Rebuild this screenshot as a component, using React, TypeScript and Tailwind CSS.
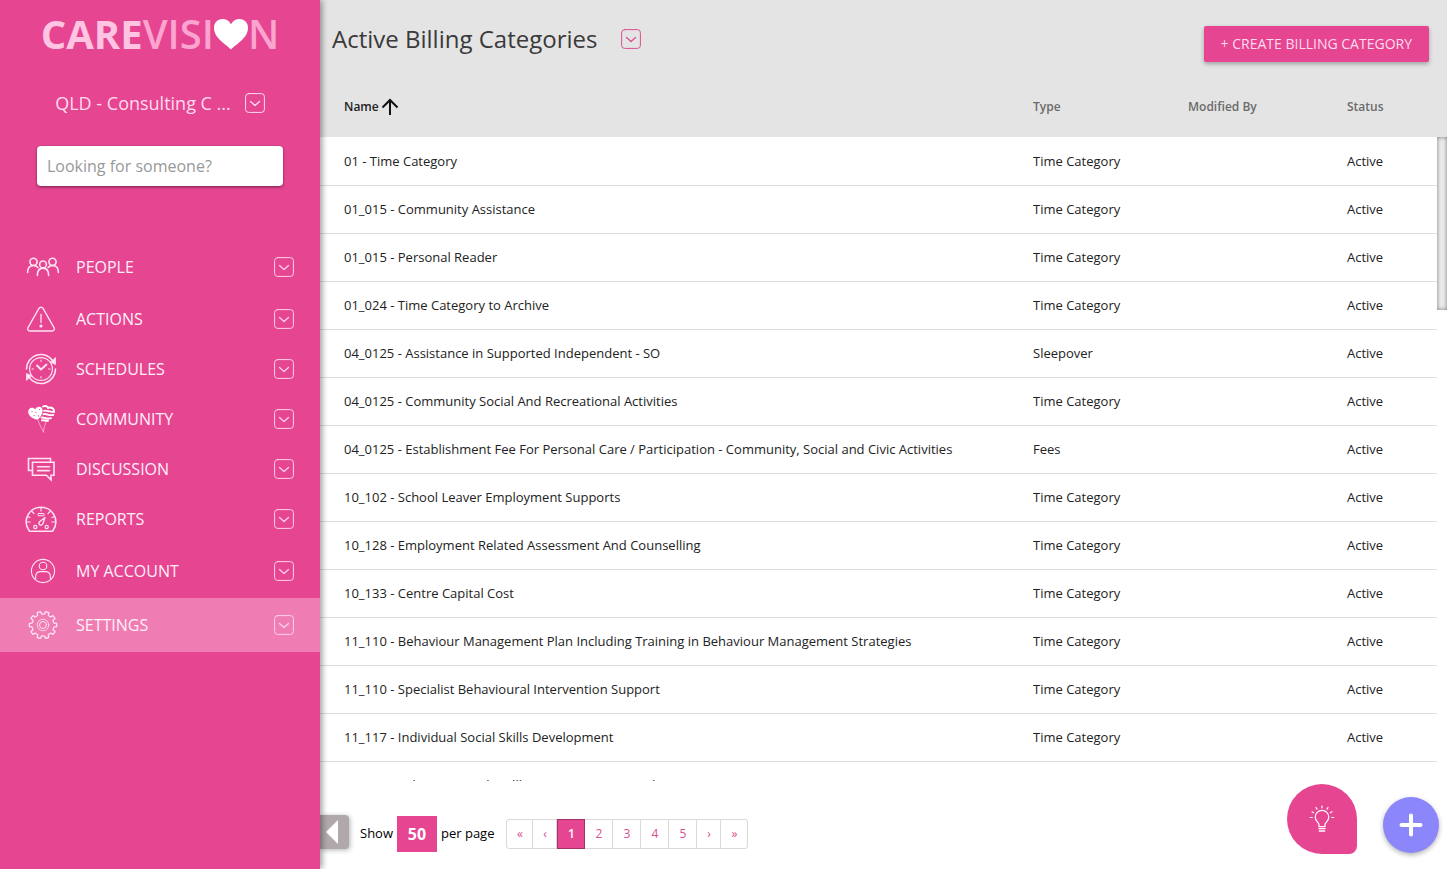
import type {ReactNode} from "react";
import {clsx} from "clsx";

const gearPath = (() => {
    const teeth = 10, cx = 19, cy = 18;
    const pt = (r: number, a: number) => `${(cx + r * Math.cos(a)).toFixed(2)} ${(cy + r * Math.sin(a)).toFixed(2)}`;
    const step = (Math.PI * 2) / teeth;
    let d = "";
    for (let i = 0; i < teeth; i++) {
        const a = i * step - Math.PI / 2 + step / 2;
        d += `${i === 0 ? "M" : "L"}${pt(11.3, a - step * 0.27)}`;
        d += `L${pt(13.7, a - step * 0.2)}`;
        d += `A13.7 13.7 0 0 1 ${pt(13.7, a + step * 0.2)}`;
        d += `L${pt(11.3, a + step * 0.27)}`;
        d += `Q${pt(10.5, a + step * 0.5)} ${pt(11.3, a + step * 0.73)}`;
    }
    return d + "Z";
})();

const NavIcon = ({children}: { children: ReactNode }) => {
    return <svg viewBox="0 0 36 36" className="h-9 w-9 shrink-0" fill="none" stroke="#ffe3f3" strokeWidth={1.6}
                strokeLinecap="round" strokeLinejoin="round" aria-hidden="true">
        {children}
    </svg>
}

const navItems: { label: string, tall?: boolean, active?: boolean, icon: ReactNode }[] = [
    {
        label: "PEOPLE", tall: true, icon: <>
            <circle cx="9.5" cy="12.8" r="3.6"/>
            <circle cx="19" cy="15.4" r="3.4"/>
            <circle cx="28.5" cy="12.8" r="3.6"/>
            <path d="M3.6 23.5c0-4.4 2.4-7 5.9-7 2 0 3.4.7 4.4 2M34.4 23.5c0-4.4-2.4-7-5.9-7-2 0-3.4.7-4.4 2"/>
            <path d="M13.4 26.5c0-4.8 2-7.4 5.6-7.4s5.6 2.6 5.6 7.4"/>
        </>
    },
    {
        label: "ACTIONS", icon: <>
            <path d="M14.8 7.6c1-1.8 3.4-1.8 4.4 0l10.8 19c1 1.7 0 3.4-2 3.4H6c-2 0-3-1.7-2-3.4z" strokeWidth={1.3}/>
            <path d="M17 13.5v8" strokeWidth={1.3}/>
            <circle cx="17" cy="25" r="0.8" fill="#ffe3f3"/>
        </>
    },
    {
        label: "SCHEDULES", icon: <>
            <path d="M2.5 18a14.5 14.5 0 0 1 26.8-7.7M31.5 18a14.5 14.5 0 0 1-26.8 7.7"/>
            <path d="M31.5 7v6.500l-5-2.300zM2.500 29v-6.500l5 2.300z" fill="#ffe3f3" strokeWidth={0.8}/>
            <circle cx="17" cy="18" r="11.4" strokeWidth={1.2}/>
            <path d="M17 9v1.5M17 25.5V27M8 18h1.5M24.5 18H26" strokeWidth={1}/>
            <path d="M13 14.5l4 4 5.5-5" strokeWidth={1.8}/>
        </>
    },
    {
        label: "COMMUNITY", icon: <>
            <path d="M13.5 18.8C8 17.5 4 14.5 4.2 10.5c.2-4 4.800-5 7-2 1.300-3.800 6.800-3.800 7.300.2.500 4-2 7.600-5 10.100z"
                  fill="#fff" stroke="none"/>
            <path d="M19 5.5c3-1.500 5 .5 5 1.500 3-1.500 6.500.5 6 4M20 9.800c3-1 6 2 10 .8M19.500 13.200c3-1 6 2 9.800.6M17.500 16.600c3-.6 6 2 9.500.6M18 19.300c2.500-.2 4 .8 6 .4"
                  stroke="#fff" strokeWidth={1.9}/>
            <path d="M14 19c1 4 3.500 7.500 5.500 12M22.500 20c-1.500 3.500-2.800 7-3 11" strokeWidth={0.6}/>
            <g fill="#e64591" stroke="none">
                <circle cx="8" cy="10.5" r="0.6"/>
                <circle cx="12" cy="11.5" r="0.6"/>
                <circle cx="15.5" cy="8.5" r="0.6"/>
                <circle cx="10" cy="14.5" r="0.6"/>
                <circle cx="14.5" cy="14.8" r="0.6"/>
            </g>
        </>
    },
    {
        label: "DISCUSSION", icon: <g strokeLinejoin="miter">
            <path d="M8.5 19.5h-4v-12h22v3.500"/>
            <path d="M8.5 11.200h21.500v13H27v4.600l-4.600-4.600H8.500z"/>
            <path d="M13.5 15.800h12M13.500 19.600h12"/>
        </g>
    },
    {
        label: "REPORTS", icon: <>
            <path d="M5.5 30.200C1.500 25 1.200 18.500 4.500 13c5.600-9 19.400-9 25 0 3.300 5.500 3 12-1 17.200z" strokeWidth={1.5}/>
            <path d="M17 6.800V10M8 10.500l2 2.200M26 10.500l-2 2.200M3.500 15.500l2.500 1M30.500 15.500l-2.500 1M2.800 21h3.400M31.200 21h-3.400"
                  strokeWidth={1.2}/>
            <rect x="13.8" y="12.5" width="6.4" height="2.2" rx="0.6" strokeWidth={1}/>
            <path d="M21 16.500l-5.500 4.200a2 2 0 1 0 3.300 2z" strokeWidth={1.3}/>
            <circle cx="11.3" cy="26" r="1.6" strokeWidth={1.2}/>
            <circle cx="22.7" cy="26" r="1.6" strokeWidth={1.2}/>
        </>
    },
    {
        label: "MY ACCOUNT", tall: true, icon: <g strokeWidth={1.1}>
            <circle cx="19" cy="18" r="11.6"/>
            <circle cx="19" cy="13" r="3.8"/>
            <path d="M11.6 26.500v-2.500c0-3.500 2-5.400 5-5.400h4.800c3 0 5 1.900 5 5.400v2.500"/>
        </g>
    },
    {
        label: "SETTINGS", tall: true, active: true, icon: <>
            <path d={gearPath} strokeWidth={1.3}/>
            <circle cx="19" cy="18" r="5.8" strokeWidth={0.8}/>
            <circle cx="19" cy="18" r="3.5" strokeWidth={1}/>
        </>
    },
]

const rows = [
    ["01 - Time Category", "Time Category"],
    ["01_015 - Community Assistance", "Time Category"],
    ["01_015 - Personal Reader", "Time Category"],
    ["01_024 - Time Category to Archive", "Time Category"],
    ["04_0125 - Assistance in Supported Independent - SO", "Sleepover"],
    ["04_0125 - Community Social And Recreational Activities", "Time Category"],
    ["04_0125 - Establishment Fee For Personal Care / Participation - Community, Social and Civic Activities", "Fees"],
    ["10_102 - School Leaver Employment Supports", "Time Category"],
    ["10_128 - Employment Related Assessment And Counselling", "Time Category"],
    ["10_133 - Centre Capital Cost", "Time Category"],
    ["11_110 - Behaviour Management Plan Including Training in Behaviour Management Strategies", "Time Category"],
    ["11_110 - Specialist Behavioural Intervention Support", "Time Category"],
    ["11_117 - Individual Social Skills Development", "Time Category"],
    ["12_027 - Other Personal Wellbeing Assessment And Training In Communities", "Time Category"],
]

const pages = [
    {label: "«", width: "w-[26px]"},
    {label: "‹", width: "w-6"},
    {label: "1", width: "w-7"},
    {label: "2", width: "w-7"},
    {label: "3", width: "w-7"},
    {label: "4", width: "w-7"},
    {label: "5", width: "w-7"},
    {label: "›", width: "w-6"},
    {label: "»", width: "w-[26px]"},
]

const ChevronBox = ({className}: { className?: string }) => {
    return <svg viewBox="0 0 20 20" className={clsx("h-5 w-5 shrink-0", className)} fill="none" stroke="currentColor"
                strokeLinecap="round" strokeLinejoin="round" aria-hidden="true">
        <rect x="0.6" y="0.6" width="18.8" height="18.8" rx="3"/>
        <path d="M5.500 8.500l4.500 4 4.500-4" strokeWidth={1.3}/>
    </svg>
}

const Sidebar = () => {
    return <aside className="relative z-10 flex w-80 shrink-0 flex-col bg-[#e64591] shadow-[2px_0_6px_rgba(0,0,0,0.4)]">
        <a href="#" aria-label="Carevision"
           className="flex h-[68px] items-center justify-center text-[40px] leading-none font-bold text-[#ffc4e2]">
            CARE<span className="font-semibold text-[#fba4d0]">VISI</span>
            <svg viewBox="0 0 34 32" className="h-8 w-[34px]" fill="#fff" aria-hidden="true">
                <path d="M17 31.500C12 26 0 20.500 0 9.800 0 .8 12-2.500 17 6.200 22-2.500 34 .8 34 9.800 34 20.500 22 26 17 31.500z"/>
            </svg>
            <span className="font-semibold text-[#fba4d0]">N</span>
        </a>
        <button type="button"
                className="flex h-[70px] items-center justify-center gap-3.5 text-lg font-medium text-[#ffdcee]">
            QLD - Consulting C ...
            <ChevronBox/>
        </button>
        <div className="px-[37px] pt-2">
            <input type="search" aria-label="Looking for someone?" placeholder="Looking for someone?"
                   className="h-10 w-full rounded bg-white px-2.5 text-base shadow-[0_1px_3px_rgba(0,0,0,0.5)] outline-none placeholder:text-[#999]"/>
        </div>
        <nav className="mt-[54px] flex flex-col">
            {navItems.map(item => {
                return <button key={item.label} type="button"
                               className={clsx("flex items-center gap-4 pr-[26px] pl-6 text-base font-medium text-[#fff0f8]",
                                   item.tall ? "h-[54px]" : "h-[50px]", item.active && "bg-[#ef7db3]")}>
                    <NavIcon>{item.icon}</NavIcon>
                    <span className="flex-1 text-left">{item.label}</span>
                    <ChevronBox className="text-[#ffd0e8]"/>
                </button>
            })}
        </nav>
    </aside>
}

const BillingTable = () => {
    return <div className="flex min-h-0 flex-1 overflow-hidden">
        <table className="w-full table-fixed self-start text-left text-[13px] text-[#222]">
            <thead>
            <tr className="h-[60px] bg-[#e4e4e4] text-xs text-[#6b6b6b]">
                <th className="pl-6 font-semibold text-[#222]" aria-sort="ascending">
                    <button type="button" className="flex items-center gap-0.5">
                        Name
                        <svg viewBox="0 0 18 18" className="h-[18px] w-[18px]" fill="none" stroke="#111"
                             strokeWidth={2} aria-hidden="true">
                            <path d="M9 17V2.500M1.500 9.500L9 2l7.500 7.500"/>
                        </svg>
                    </button>
                </th>
                <th className="w-[155px] font-semibold">Type</th>
                <th className="w-[159px] font-semibold">Modified By</th>
                <th className="w-[90px] font-semibold">Status</th>
            </tr>
            </thead>
            <tbody>
            {rows.map(([name, type]) => {
                return <tr key={name} className="h-12 border-b border-[#dedede]">
                    <td className="truncate pt-0.5 pl-6">{name}</td>
                    <td className="pt-0.5">{type}</td>
                    <td></td>
                    <td className="pt-0.5">Active</td>
                </tr>
            })}
            </tbody>
        </table>
        <div className="w-2.5 shrink-0">
            <div className="h-[60px] bg-[#e4e4e4]"/>
            <div className="h-[173px] bg-[#ececec] shadow-[inset_0_0_4px_rgba(0,0,0,0.5)]"/>
        </div>
    </div>
}

const Footer = () => {
    return <footer className="flex h-[88px] shrink-0 items-center pr-2 text-black">
        <button type="button" aria-label="Collapse menu"
                className="mt-3.5 flex h-[34px] w-[29px] items-center rounded-r bg-[#b0a8ab] pl-1.5 shadow-[1px_1px_5px_rgba(0,0,0,0.3)]">
            <svg viewBox="0 0 12 24" className="h-6 w-3" fill="#fff" aria-hidden="true">
                <path d="M12 0v24L0 12z"/>
            </svg>
        </button>
        <label className="mt-[18px] ml-[11px] flex items-center gap-1 text-[13px] font-medium">
            Show
            <select defaultValue="50"
                    className="h-9 w-10 appearance-none bg-[#e64591] text-center text-base font-bold text-white outline-none">
                <option>50</option>
            </select>
            per page
        </label>
        <nav aria-label="Pages"
             className="mt-[18px] ml-3 flex h-[30px] rounded-[3px] border border-[#d9d9d9] text-xs text-[#d94e8f]">
            {pages.map(page => {
                return <button key={page.label} type="button"
                               className={clsx("border-r last:border-r-0", page.width,
                                   page.label === "1" ? "-my-px border border-[#a33269] bg-[#e64591] font-semibold text-white" : "border-[#d9d9d9]")}>
                    {page.label}
                </button>
            })}
        </nav>
        <button type="button" aria-label="Tips"
                className="mr-[26px] mb-3 ml-auto flex h-[70px] w-[70px] items-center justify-center rounded-[35px] rounded-br-lg bg-[#e64591]">
            <svg viewBox="0 0 28 28" className="h-7 w-7" fill="none" stroke="#fff" strokeWidth={1.2}
                 strokeLinecap="round" strokeLinejoin="round" aria-hidden="true">
                <path d="M11 21.500v-2c0-2-3.800-3.500-3.800-7.300a6.800 6.800 0 0 1 13.600 0c0 3.800-3.800 5.300-3.800 7.300v2z"/>
                <path d="M11 23.500h6M11.300 26h5.400" strokeWidth={1.4}/>
                <path d="M14 1v1.800M8 2.500l1 1.600M20 2.500l-1 1.600M4 6.800l1.600 1M24 6.800l-1.600 1M2.300 12.500h1.900M25.700 12.500h-1.900"/>
            </svg>
        </button>
        <button type="button" aria-label="Add"
                className="flex h-14 w-14 items-center justify-center rounded-full bg-[#8c86fb] shadow-[0_2px_5px_rgba(0,0,0,0.3)]">
            <svg viewBox="0 0 24 24" className="h-6 w-6" stroke="#fff" strokeWidth={4} strokeLinecap="round"
                 aria-hidden="true">
                <path d="M12 2.500v19M2.500 12h19"/>
            </svg>
        </button>
    </footer>
}

export default function App() {
    return <div className="flex h-screen bg-white font-['Open_Sans',sans-serif]">
        <Sidebar/>
        <main className="flex min-w-0 flex-1 flex-col">
            <header className="flex h-[77px] shrink-0 items-center bg-[#e4e4e4] pr-[18px] pl-3">
                <h1 className="text-2xl text-[#3a3a3a]">Active Billing Categories</h1>
                <button type="button" aria-label="Change list" className="ml-6">
                    <ChevronBox className="text-[#d9508f]"/>
                </button>
                <button type="button"
                        className="mt-2.5 ml-auto h-9 rounded-xs bg-[#e64591] px-[17px] text-sm text-[#ffdcee] shadow-[0_2px_4px_rgba(0,0,0,0.3)]">
                    + CREATE BILLING CATEGORY
                </button>
            </header>
            <BillingTable/>
            <Footer/>
        </main>
    </div>
}
